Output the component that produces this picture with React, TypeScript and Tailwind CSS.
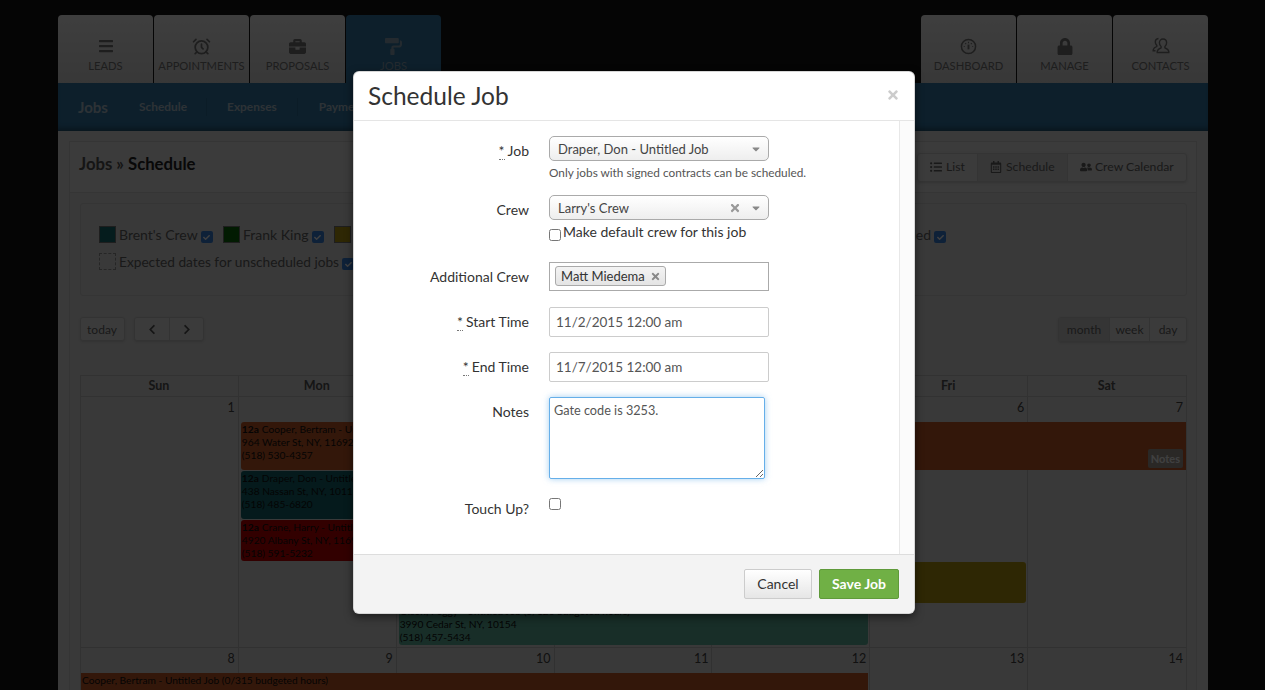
import { FaBars, FaBriefcase, FaPaintRoller, FaLock, FaListUl, FaRegCalendarAlt, FaUserFriends, FaChevronLeft, FaChevronRight, FaCheck, FaTimes, FaCaretDown } from 'react-icons/fa'
import { AlarmClock } from 'lucide-react'

function GaugeIcon() {
  return (
    <svg viewBox="0 0 18 18" className="w-[17px] h-[17px]" fill="none" stroke="currentColor">
      <circle cx="9" cy="9" r="7.5" strokeWidth="1.6" />
      <path d="M9 4v1.5M5.5 5.5l1 1M12.5 5.5l-1 1M4 9h1M13 9h1" strokeWidth="1.2" />
      <path d="M9 7v5" strokeWidth="2" />
    </svg>
  )
}

function ContactsIcon() {
  return (
    <svg viewBox="0 0 18 18" className="w-[18px] h-[18px]" fill="none" stroke="currentColor" strokeWidth="1.4">
      <path d="M11 2c2.2 0 3.6 1.7 3.6 3.8 0 1.6-.8 3-1.7 3.8v1.2c1.6.6 3.6 1.4 3.9 3.7v1H5.2v-1c.3-2.3 2.3-3.1 3.9-3.7V9.600C8.200 8.800 7.400 7.400 7.400 5.800 7.400 3.700 8.800 2 11 2z" />
      <path d="M6.500 1.500C4.500 1.700 3.300 3.200 3.300 5c0 1.500.7 2.700 1.500 3.400v1C3.300 10 1.600 10.700 1.200 12.800v1h2.300" />
    </svg>
  )
}

const leftTabs = [
  { label: 'LEADS', icon: <FaBars className="w-[16px] h-[16px]" /> },
  { label: 'APPOINTMENTS', icon: <AlarmClock className="w-[19px] h-[19px]" strokeWidth={2.2} /> },
  { label: 'PROPOSALS', icon: <FaBriefcase className="w-[17px] h-[17px]" /> },
  { label: 'JOBS', icon: <FaPaintRoller className="w-[17px] h-[17px]" />, active: true },
]

const rightTabs = [
  { label: 'DASHBOARD', icon: <GaugeIcon /> },
  { label: 'MANAGE', icon: <FaLock className="w-[16px] h-[17px]" /> },
  { label: 'CONTACTS', icon: <ContactsIcon /> },
]

function Tab({ label, icon, active }: { label: string; icon: React.ReactNode; active?: boolean }) {
  return (
    <div
      className={`w-[95px] h-[68px] rounded-t-[4px] flex flex-col items-center pt-[21px] ${
        active ? 'bg-[#347cac] text-[#8fa9bb]' : 'bg-gradient-to-b from-[#f8f8f8] to-[#dcdcdc] text-[#777]'
      }`}
    >
      <div className="h-[20px] flex items-center">{icon}</div>
      <div className="text-[11.2px] leading-[16px] mt-[2px]">{label}</div>
    </div>
  )
}

function Swatch({ color, dashed }: { color?: string; dashed?: boolean }) {
  return (
    <span
      className={`inline-block w-[17px] h-[17px] mr-[3px] shrink-0 border ${dashed ? 'border-dashed border-[#999]' : 'border-[#777]'}`}
      style={color ? { backgroundColor: color } : undefined}
    />
  )
}

function BlueCheck() {
  return (
    <span className="inline-flex items-center justify-center w-[12px] h-[12px] ml-[3px] mt-[5px] rounded-[2px] bg-[#3b84e0] text-white">
      <FaCheck className="w-[7px] h-[7px]" />
    </span>
  )
}

function Event({ className, time, title, lines, children }: { className: string; time?: string; title?: string; lines?: string[]; children?: React.ReactNode }) {
  return (
    <div className={`relative text-[10.2px] leading-[13px] text-[#111] px-[1px] pt-[1px] overflow-hidden whitespace-nowrap ${className}`}>
      {title && (
        <div>
          {time && <b className="mr-[3px]">{time}</b>}
          {title}
        </div>
      )}
      {lines?.map(l => <div key={l}>{l}</div>)}
      {children}
    </div>
  )
}

const days = ['Sun', 'Mon', 'Tue', 'Wed', 'Thu', 'Fri', 'Sat']

function DayCells({ nums }: { nums: number[] }) {
  return (
    <div className="absolute inset-0 grid grid-cols-7">
      {nums.map(n => (
        <div key={n} className="border-r border-[#c4c4c4] last:border-r-0 text-right pr-[3px] pt-[3px] text-[12.5px] leading-[16px] text-[#444]">
          {n}
        </div>
      ))}
    </div>
  )
}

function FormRow({ label, req, className, children }: { label: string; req?: boolean; className: string; children: React.ReactNode }) {
  return (
    <div className={`flex ${className}`}>
      <label className="w-[161px] shrink-0 text-right pt-[5px] text-[14px] leading-[20px] text-[#333]">
        {req && <span className="border-b border-dotted border-[#777] mr-[3px]">*</span>}
        {label}
      </label>
      <div className="ml-[20px] w-[220px]">{children}</div>
    </div>
  )
}

function SelectBox({ value, clear }: { value: string; clear?: boolean }) {
  return (
    <div className="h-[25px] w-[220px] rounded-[5px] border border-[#aaa] bg-gradient-to-b from-white to-[#eeeeee] flex items-center pl-[8px] pr-[6px] text-[13px] text-[#444]">
      <span className="flex-1 pt-[2px]">{value}</span>
      {clear && <FaTimes className="w-[12px] h-[12px] text-[#999] mr-[9px]" />}
      <FaCaretDown className="w-[12px] h-[12px] text-[#888]" />
    </div>
  )
}

const textInput = 'h-[30px] w-[220px] border border-[#ccc] rounded-[2px] pl-[6px] text-[13.5px] leading-[28px] text-[#555]'

export default function App() {
  return (
    <div className="relative h-[690px] w-[1265px] overflow-hidden bg-[#151515] [font-family:Lato,sans-serif]">
      <div className="mx-[58px] pt-[15px] w-[1150px]">
        <div className="flex justify-between">
          <div className="flex gap-[1px]">
            {leftTabs.map(t => <Tab key={t.label} {...t} />)}
          </div>
          <div className="flex gap-[1px]">
            {rightTabs.map(t => <Tab key={t.label} {...t} />)}
          </div>
        </div>

        <div className="h-[48px] bg-[#347cac] flex items-center pl-[20px] text-[#b5c8d6] shadow-[inset_0_-6px_6px_-4px_rgba(0,0,0,0.4)]">
          <span className="text-[15px] font-bold w-[61px]">Jobs</span>
          <span className="text-[11.9px] font-bold pr-[19px] border-r border-[#2f6f9a] leading-[18px]">Schedule</span>
          <span className="text-[11.9px] font-bold px-[20px] border-r border-[#2f6f9a] leading-[18px]">Expenses</span>
          <span className="text-[11.9px] font-bold px-[21px]">Payments</span>
        </div>

        <div className="bg-[#e6e6e6] px-[11px] pt-[10px] h-[600px]">
          <div className="border border-[#d2d2d2] bg-[#e2e2e2] h-[600px]">
            <div className="h-[51px] border-b border-[#d2d2d2] bg-[#e9e9e9] flex items-center justify-between pl-[9px] pr-[9px]">
              <div className="text-[16.7px] font-bold text-[#555] -mt-[4px]">Jobs » <span className="text-[#222]">Schedule</span></div>
              <div className="flex h-[29px] text-[12.2px] text-[#666] rounded-[3px] border border-[#cfcfcf] items-stretch shadow-sm">
                <span className="flex items-center gap-[4px] w-[60px] pl-[12px] border-r border-[#cfcfcf]"><FaListUl className="w-[12px] h-[12px]" />List</span>
                <span className="flex items-center gap-[4px] w-[89px] pl-[12px] bg-[#dcdcdc]"><FaRegCalendarAlt className="w-[12px] h-[12px]" />Schedule</span>
                <span className="flex items-center gap-[3px] w-[119px] pl-[12px] border-l border-[#cfcfcf]"><FaUserFriends className="w-[12px] h-[12px]" />Crew Calendar</span>
              </div>
            </div>

            <div className="ml-[10px] mr-[9px] mt-[10px] h-[93px] border border-[#d2d2d2] rounded-[3px] pl-[18px] pt-[22px] text-[14px] leading-[17px] text-[#666]">
              <div className="flex items-start w-[847px]">
                <div className="flex w-[124px]"><Swatch color="#146f73" />Brent's Crew<BlueCheck /></div>
                <div className="flex w-[111px]"><Swatch color="#0b6b0b" />Frank King<BlueCheck /></div>
                <div className="flex flex-1"><Swatch color="#b89b10" />Larry's Crew<BlueCheck /></div>
                <div className="flex">Unscheduled<BlueCheck /></div>
              </div>
              <div className="flex items-start mt-[10px] text-[13.7px]"><Swatch dashed />Expected dates for unscheduled jobs<BlueCheck /></div>
            </div>

            <div className="ml-[10px] mr-[9px] mt-[21px] flex items-start justify-between">
              <div className="flex gap-[9px] text-[12px] text-[#666]">
                <span className="h-[24px] w-[45px] flex items-center justify-center pt-[1px] pr-[1px] rounded-[3px] border border-[#ccc] bg-[#ececec] shadow-sm">today</span>
                <span className="h-[24px] flex rounded-[3px] border border-[#ccc] bg-[#ececec] shadow-sm">
                  <span className="w-[35px] flex items-center justify-center border-r border-[#ccc]"><FaChevronLeft className="w-[10px] h-[11px] text-[#555]" /></span>
                  <span className="w-[33px] flex items-center justify-center"><FaChevronRight className="w-[10px] h-[11px] text-[#555]" /></span>
                </span>
              </div>
              <div className="flex h-[25px] rounded-[3px] border border-[#ccc] text-[12px] text-[#666] bg-[#ececec] shadow-sm">
                <span className="w-[50px] flex items-center justify-center bg-[#d4d4d4]">month</span>
                <span className="w-[41px] flex items-center justify-center border-x border-[#ccc]">week</span>
                <span className="w-[36px] flex items-center justify-center">day</span>
              </div>
            </div>

            <div className="ml-[10px] w-[1107px] mt-[33px] border border-[#c8c8c8]">
              <div className="grid grid-cols-7 h-[21px] border-b border-[#c8c8c8] text-[12.5px] font-bold text-[#555]">
                {days.map(d => (
                  <div key={d} className="flex items-center justify-center border-r border-[#c8c8c8] last:border-r-0 pr-[1px]">{d}</div>
                ))}
              </div>

              <div className="relative h-[251px] border-b border-[#c4c4c4]">
                <DayCells nums={[1, 2, 3, 4, 5, 6, 7]} />
                <div className="relative grid grid-cols-7 pt-[25px] gap-y-[1px]">
                  <Event className="col-start-2 col-span-6 ml-[2px] h-[48px] bg-[#cc5c28] rounded-l-[3px]" time="12a" title="Cooper, Bertram - Untitled Job" lines={['964 Water St, NY, 11692', '(518) 530-4357']}>
                    <span className="absolute right-[3px] bottom-[2px] h-[19px] px-[3px] rounded-[2px] bg-[#a8a098] text-[11px] font-bold leading-[19px] text-white">Notes</span>
                  </Event>
                  <Event className="col-start-2 col-span-4 ml-[2px] mr-[2px] h-[48px] bg-[#14686f] rounded-[3px]" time="12a" title="Draper, Don - Untitled Job" lines={['438 Nassan St, NY, 10113', '(518) 485-6820']} />
                  <Event className="col-start-2 col-span-4 ml-[2px] mr-[2px] h-[41px] bg-[#c80000] rounded-[3px]" time="12a" title="Crane, Harry - Untitled Job" lines={['4920 Albany St, NY, 11692', '(518) 591-5232']} />
                  <Event className="col-start-4 col-span-3 mr-[2px] h-[41px] bg-[#b89b10] rounded-[3px]" />
                  <Event className="col-start-3 col-span-3 ml-[2px] mr-[2px] h-[41px] bg-[#62b7a0] rounded-[3px]" title="Olson, Peggy - Untitled Job (0/120 budgeted hours)" lines={['3990 Cedar St, NY, 10154', '(518) 457-5434']} />
                </div>
              </div>

              <div className="relative h-[100px]">
                <DayCells nums={[8, 9, 10, 11, 12, 13, 14]} />
                <div className="relative grid grid-cols-7 pt-[25px]">
                  <Event className="col-start-1 col-span-5 mr-[2px] h-[48px] bg-[#cc5c28]" title="Cooper, Bertram - Untitled Job (0/315 budgeted hours)" />
                </div>
              </div>
            </div>
          </div>
        </div>
      </div>

      {/* backdrop + modal */}
      <div className="absolute inset-0 bg-black/75" />
      <div className="absolute left-[353px] top-[71px] w-[562px] h-[543px] flex flex-col rounded-[6px] bg-white shadow-[0_3px_9px_rgba(0,0,0,0.5)] border border-[#999]/40">
        <div className="h-[49px] flex items-center justify-between pl-[14px] pr-[14px] border-b border-[#e5e5e5]">
          <h3 className="text-[24.5px] text-[#333]">Schedule Job</h3>
          <FaTimes className="w-[14px] h-[14px] -mt-[3px] text-[#ccc]" />
        </div>

        <div className="flex-1 flex min-h-0">
          <div className="flex-1 pt-[15px] pl-[14px]">
            <FormRow label="Job" req className="mb-[15px] h-[44px]">
              <SelectBox value="Draper, Don - Untitled Job" />
              <p className="mt-[3px] text-[11.8px] leading-[17px] text-[#555] whitespace-nowrap">Only jobs with signed contracts can be scheduled.</p>
            </FormRow>
            <FormRow label="Crew" className="mb-[15px] h-[52px]">
              <SelectBox value="Larry's Crew" clear />
              <div className="flex text-[14px] leading-[18px] text-[#333] mt-[3px]">
                <input type="checkbox" readOnly className="w-[12px] h-[12px] mt-[6px] mr-[2px]" />
                Make default crew for this job
              </div>
            </FormRow>
            <FormRow label="Additional Crew" className="mb-[16px]">
              <div className="h-[29px] border border-[#aaa] pl-[5px] pt-[3px]">
                <div className="flex items-center h-[20px] w-[111px] pl-[5px] pt-[1px] border border-[#aaa] rounded-[3px] bg-gradient-to-b from-[#f4f4f4] to-[#e4e4e4] text-[13px] text-[#333]">
                  Matt Miedema
                  <FaTimes className="w-[11px] h-[11px] text-[#888] ml-[5px]" />
                </div>
              </div>
            </FormRow>
            <FormRow label="Start Time" req className="mb-[15px]">
              <div className={textInput}>11/2/2015 12:00 am</div>
            </FormRow>
            <FormRow label="End Time" req className="mb-[15px]">
              <div className={textInput}>11/7/2015 12:00 am</div>
            </FormRow>
            <FormRow label="Notes" className="mb-[15px]">
              <textarea
                readOnly
                value="Gate code is 3253."
                className="block w-[216px] h-[82px] border border-[#66afe9] rounded-[2px] px-[4px] py-[3px] text-[12.7px] leading-[18px] text-[#555] shadow-[0_0_6px_rgba(102,175,233,0.6)] outline-none"
              />
            </FormRow>
            <FormRow label="Touch Up?" className="">
              <input type="checkbox" readOnly className="block w-[12px] h-[12px] mt-[4px]" />
            </FormRow>
          </div>
          <div className="w-[15px] border-l border-[#e8e8e8] bg-[#fbfbfb]" />
        </div>

        <div className="h-[59px] border-t border-[#ddd] bg-[#f3f3f3] rounded-b-[6px] flex items-center justify-end gap-[7px] pr-[15px]">
          <span className="h-[30px] w-[68px] flex items-center justify-center pb-[2px] rounded-[2px] border border-[#ccc] bg-gradient-to-b from-white to-[#e6e6e6] text-[14px] text-[#333]">Cancel</span>
          <span className="h-[30px] w-[80px] flex items-center justify-center pb-[2px] rounded-[2px] border border-[#5f9a3a] bg-[#70b045] text-[14px] font-bold text-white">Save Job</span>
        </div>
      </div>
    </div>
  )
}
